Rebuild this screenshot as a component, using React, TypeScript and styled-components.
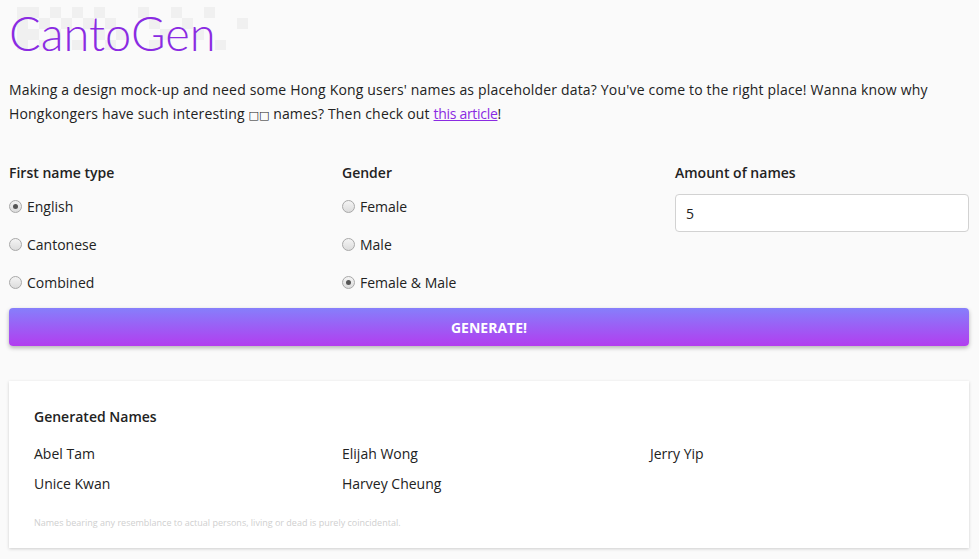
import styled, {createGlobalStyle} from "styled-components"

const GlobalStyle = createGlobalStyle`
  body {
    margin: 0;
    background: #fafafa;
    color: #222;
    font-family: "Open Sans", "Noto Sans", sans-serif;
  }
`

const pixels: [number, number][] = [
  [0, 0], [1, 0], [3, 0], [5, 0], [7, 0], [11, 0], [14, 0], [17, 0],
  [0, 1], [2, 1], [4, 1], [6, 1], [8, 1], [12, 1], [15, 1], [20, 1],
  [0, 2], [1, 2], [3, 2], [7, 2], [9, 2], [13, 2], [16, 2],
  [0, 3], [2, 3], [5, 3], [8, 3], [12, 3], [18, 3],
]

const firstNameTypes = ["English", "Cantonese", "Combined"]
const genders = ["Female", "Male", "Female & Male"]
const names = ["Abel Tam", "Elijah Wong", "Jerry Yip", "Unice Kwan", "Harvey Cheung"]

export default function App() {
  return (
    <Page>
      <GlobalStyle />
      <Header>
        <PixelBackdrop width="240" height="50" viewBox="0 0 240 50">
          {pixels.map(([x, y]) => (
            <rect key={`${x}-${y}`} x={8 + x * 11} y={7 + y * 11} width="11" height="11" fill="#f0f0f0" />
          ))}
        </PixelBackdrop>
        <Title>CantoGen</Title>
      </Header>
      <Intro>
        Making a design mock-up and need some Hong Kong users' names as placeholder data? You've come to the right
        place! Wanna know why Hongkongers have such interesting <Tofu>□□</Tofu> names? Then check out{" "}
        <a href="#">this article</a>!
      </Intro>
      <Form>
        <Field>
          <FieldLabel>First name type</FieldLabel>
          {firstNameTypes.map((t, i) => (
            <RadioRow key={t}>
              <Radio type="radio" name="type" defaultChecked={i === 0} />
              {t}
            </RadioRow>
          ))}
        </Field>
        <Field>
          <FieldLabel>Gender</FieldLabel>
          {genders.map((g, i) => (
            <RadioRow key={g}>
              <Radio type="radio" name="gender" defaultChecked={i === 2} />
              {g}
            </RadioRow>
          ))}
        </Field>
        <Field>
          <FieldLabel>Amount of names</FieldLabel>
          <AmountInput type="text" defaultValue="5" />
        </Field>
      </Form>
      <GenerateButton>Generate!</GenerateButton>
      <ResultsCard>
        <CardTitle>Generated Names</CardTitle>
        <NameGrid>
          {names.map((n) => (
            <Name key={n}>{n}</Name>
          ))}
        </NameGrid>
        <Disclaimer>Names bearing any resemblance to actual persons, living or dead is purely coincidental.</Disclaimer>
      </ResultsCard>
    </Page>
  )
}

const Page = styled.div`
    padding: 0 10px 12px 9px;
`

const Header = styled.div`
    position: relative;
    padding-top: 3px;
`

const PixelBackdrop = styled.svg`
    position: absolute;
    left: 0;
    top: 0;
`

const Title = styled.h1`
    position: relative;
    margin: 0;
    font-family: "Lato", "Open Sans", sans-serif;
    font-size: 47px;
    line-height: 56px;
    font-weight: 300;
    color: #8a2be2;
    padding-top: 2px;
    height: 54px;
`

const Intro = styled.p`
    margin: 19px 0 0;
    font-size: 14px;
    line-height: 24px;
    letter-spacing: 0.18px;

    a {
        color: #8a2be2;
        letter-spacing: -0.3px;
    }
`

const Tofu = styled.span`
    font-family: "DejaVu Sans", sans-serif;
    font-size: 11px;
    letter-spacing: 0;
`

const Form = styled.div`
    display: grid;
    grid-template-columns: 333px 333px 1fr;
    margin-top: 35px;
`

const Field = styled.div`
    display: flex;
    flex-direction: column;
`

const FieldLabel = styled.div`
    font-size: 14px;
    line-height: 20px;
    font-weight: 600;
    margin-bottom: 4px;
`

const RadioRow = styled.label`
    display: flex;
    align-items: center;
    gap: 5px;
    height: 38px;
    font-size: 14px;
`

const Radio = styled.input`
    appearance: none;
    margin: 0;
    width: 13px;
    height: 13px;
    border-radius: 50%;
    border: 1px solid #a8a8a8;
    background: linear-gradient(#f4f4f4, #dcdcdc);
    box-sizing: border-box;
    display: grid;
    place-items: center;

    &:checked::after {
        content: "";
        width: 5px;
        height: 5px;
        border-radius: 50%;
        background: #555;
    }
`

const AmountInput = styled.input`
    box-sizing: border-box;
    margin-top: 7px;
    width: 100%;
    height: 38px;
    border: 1px solid #d2d2d2;
    border-radius: 4px;
    padding: 0 10px;
    font-family: inherit;
    font-size: 14px;
    color: #222;
    background: #fff;
`

const GenerateButton = styled.button`
    display: block;
    width: 100%;
    height: 38px;
    margin-top: 7px;
    border: none;
    border-radius: 4px;
    background: linear-gradient(#867ffb, #b23def);
    box-shadow: 0 2px 4px rgba(0, 0, 0, 0.28);
    color: #fff;
    font-family: "Open Sans", sans-serif;
    font-weight: 700;
    font-size: 14px;
    text-transform: uppercase;
`

const ResultsCard = styled.div`
    margin-top: 35px;
    background: #fff;
    box-shadow: 0 1px 3px rgba(0, 0, 0, 0.18);
    padding: 26px 25px 19px;
`

const CardTitle = styled.div`
    font-size: 14px;
    line-height: 20px;
    font-weight: 600;
`

const NameGrid = styled.div`
    display: grid;
    grid-template-columns: 308px 308px 1fr;
    margin-top: 12px;
`

const Name = styled.div`
    font-size: 14px;
    line-height: 30px;
`

const Disclaimer = styled.div`
    margin-top: 18px;
    font-size: 9px;
    line-height: 12px;
    color: #cfcfcf;
`
